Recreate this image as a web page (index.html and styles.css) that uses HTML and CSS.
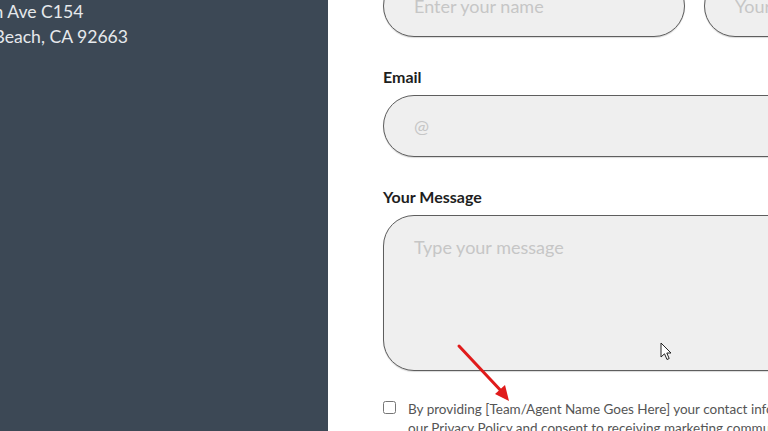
FILE: index.html
```html
<!DOCTYPE html>
<html lang="en">
<head>
    <meta charset="UTF-8">
    <meta name="viewport" content="width=device-width, initial-scale=1.0">
    <title>Contact</title>
    <link rel="stylesheet" href="styles.css">
</head>
<body>
    <div class="page">
        <aside class="sidebar">
            <div class="address">
                <p>120 Doran Ave C154</p>
                <p>Newport Beach, CA 92663</p>
            </div>
        </aside>
        <main class="content">
            <form class="contact-form">
                <div class="row">
                    <input class="field" type="text" placeholder="Enter your name">
                    <input class="field" type="text" placeholder="Your phone">
                </div>
                <label class="label" for="email">Email</label>
                <input class="field" id="email" type="email" placeholder="@">
                <label class="label" for="msg">Your Message</label>
                <textarea class="field message" id="msg" placeholder="Type your message"></textarea>
                <div class="consent">
                    <input type="checkbox" id="consent">
                    <label for="consent">By providing [Team/Agent Name Goes Here] your contact information, you acknowledge and agree to our Privacy Policy and consent to receiving marketing communications.</label>
                </div>
            </form>

            <svg class="arrow" width="70" height="70" viewBox="0 0 70 70">
                <line x1="5" y1="5" x2="50" y2="53" stroke="#e01b1b" stroke-width="3" stroke-linecap="round"/>
                <path d="M41 53 L55 60 L51 44 Z" fill="#e01b1b"/>
            </svg>

            <svg class="cursor" width="14" height="20" viewBox="0 0 14 20">
                <path d="M1 1 L1 15 L4.5 11.8 L7 17.5 L9.2 16.5 L6.8 11 L11 11 Z" fill="#fff" stroke="#222" stroke-width="1" stroke-linejoin="round"/>
            </svg>
        </main>
    </div>
</body>
</html>
```

FILE: styles.css
```css
* {
    box-sizing: border-box;
}

html, body {
    margin: 0;
    height: 100%;
    overflow: hidden;
}

body {
    font-family: Lato, "Open Sans", sans-serif;
    background: #fff;
}

.page {
    display: grid;
    grid-template-columns: 328px 1fr;
    height: 431px;
}

.sidebar {
    background-color: #3c4855;
    overflow: hidden;
    position: relative;
}

/* the column is cut at the left edge of the window */
.address {
    position: absolute;
    right: 200px;
    top: 0;
    margin-top: -1px;
    white-space: nowrap;
    color: #e6e9ec;
    font-size: 17.6px;
    line-height: 25px;
}

.address p {
    margin: 0;
}

.content {
    position: relative;
    overflow: hidden;
}

.contact-form {
    width: 623px;
    margin-top: -25px;
    margin-left: 55px;
    display: flex;
    flex-direction: column;
}

.row {
    display: grid;
    grid-template-columns: 1fr 1fr;
    gap: 19px;
}

.field {
    width: 100%;
    height: 62px;
    padding: 0 30px;
    border: 1px solid #5e5e5e;
    border-radius: 31px;
    background: #efefef;
    font-family: inherit;
    font-size: 18px;
    color: #333;
    box-shadow: 0 1px 1px rgba(0, 0, 0, 0.15);
}

.field::placeholder {
    color: #c6c6c6;
}

.label {
    margin: 28px 0 6px;
    font-size: 16px;
    line-height: 24px;
    font-weight: 700;
    color: #1e1e1e;
}

.message {
    height: 156px;
    padding-top: 20px;
    resize: none;
    line-height: 22px;
}

.consent {
    display: flex;
    align-items: flex-start;
    gap: 12px;
    margin-top: 29px;
    width: 637px;
    font-size: 13.5px;
    line-height: 19px;
    color: #555;
}

.consent input {
    margin: 1px 0 0;
    width: 13px;
    height: 13px;
    flex: none;
}

.arrow {
    position: absolute;
    left: 126px;
    top: 341px;
}

.cursor {
    position: absolute;
    left: 332px;
    top: 342px;
}
```
